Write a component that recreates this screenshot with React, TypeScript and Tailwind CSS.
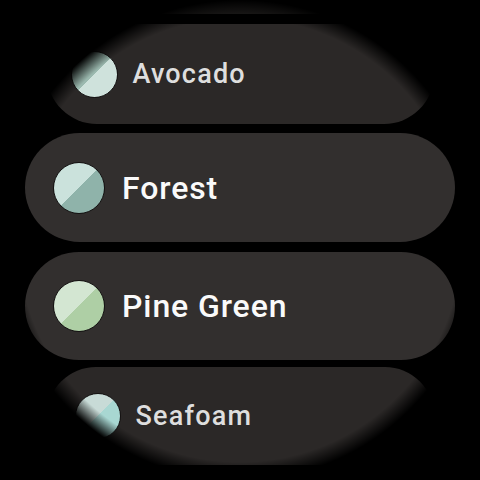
import React from "react"

function Swatch({ bg, size }: { bg: string; size: string }) {
  return <div className={`${size} shrink-0 rounded-full border-[1.5px] border-[#141212] ${bg}`} />
}

export default function App() {
  return (
    <div className="relative h-[480px] w-[480px] overflow-hidden bg-black font-['Roboto',sans-serif]">
      <div className="flex flex-col items-center">
        {/* item above, almost fully out of view */}
        <div className="mt-[-76px] h-[90px] w-[360px] rounded-full bg-[#1f1d1c]" />

        <div className="mt-[10px] flex h-[100px] w-[387px] items-center rounded-full bg-[#2b2827] pl-[24px]">
          <Swatch size="h-[47px] w-[47px]" bg="bg-[linear-gradient(135deg,#9bb9af_50%,#cfe2dc_50%)]" />
          <span className="ml-[15px] text-[27px] font-medium tracking-[1.2px] text-[#dedede]">Avocado</span>
        </div>

        <div className="mt-[9px] flex h-[109px] w-[430px] items-center rounded-full bg-[#322f2e] pl-[28px]">
          <Swatch size="h-[52px] w-[52px]" bg="bg-[linear-gradient(135deg,#cbe2dc_50%,#8fb3aa_50%)]" />
          <span className="ml-[17px] text-[32px] font-medium tracking-[0.9px] text-[#fafafa]">Forest</span>
        </div>

        <div className="mt-[10px] flex h-[108px] w-[430px] items-center rounded-full bg-[#322f2e] pl-[28px]">
          <Swatch size="h-[52px] w-[52px]" bg="bg-[linear-gradient(135deg,#d3e6d2_50%,#aecfa5_50%)]" />
          <span className="ml-[17px] text-[32px] font-medium tracking-[0.9px] text-[#fafafa]">Pine Green</span>
        </div>

        <div className="mt-[7px] flex h-[98px] w-[387px] items-center rounded-full bg-[#2b2827] pl-[28px]">
          <Swatch size="h-[46px] w-[46px]" bg="bg-[linear-gradient(135deg,#c8dbd7_50%,#a8d7d2_50%)]" />
          <span className="ml-[15px] text-[27px] font-medium tracking-[1.2px] text-[#dedede]">Seafoam</span>
        </div>
      </div>

      {/* round watch bezel fade */}
      <div className="pointer-events-none absolute inset-0 bg-[radial-gradient(circle_at_center,transparent_222px,black_240px)]" />
    </div>
  )
}
